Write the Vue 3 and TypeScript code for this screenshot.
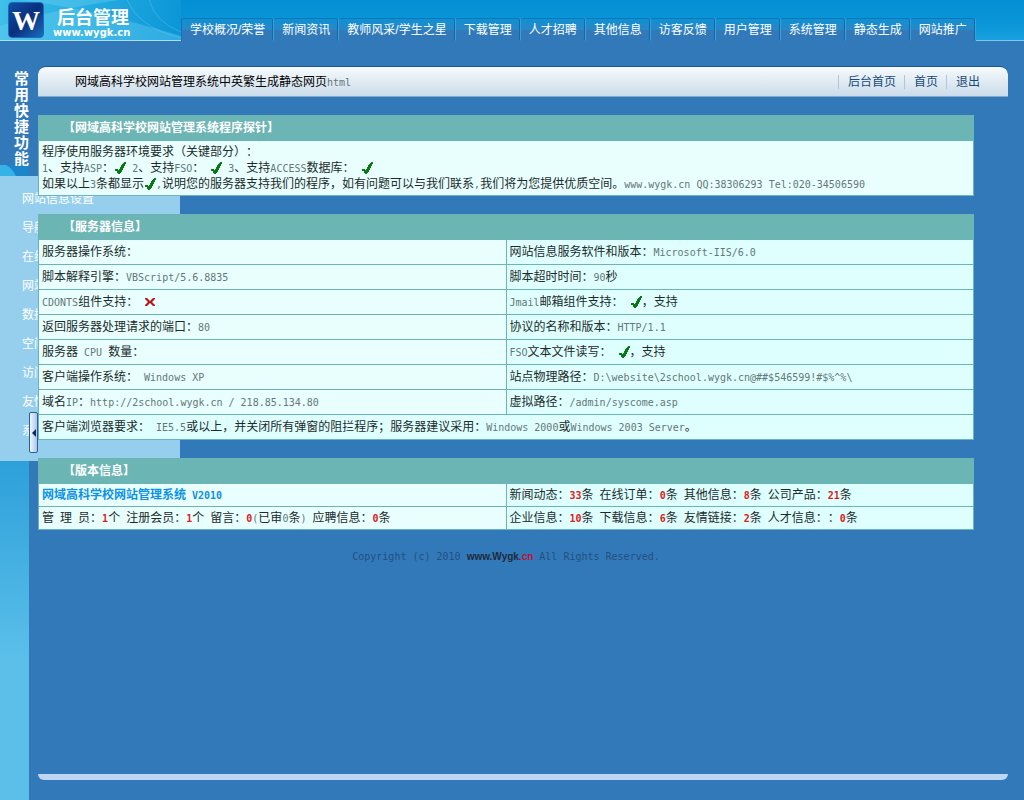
<script setup lang="ts">
import { h, type FunctionalComponent } from 'vue'

const navItems: string[] = [
  '学校概况/荣誉', '新闻资讯', '教师风采/学生之星', '下载管理', '人才招聘', '其他信息',
  '访客反馈', '用户管理', '系统管理', '静态生成', '网站推广',
]
const quickLinks: string[] = ['后台首页', '首页', '退出']
const menuItems: string[] = ['网站信息设置', '导航', '在线', '网站', '数据', '空间', '访问', '友情', '系统']

const probeLines: string[] = [
  '程序使用服务器环境要求（关键部分）：',
  '1、支持ASP：[ok] 2、支持FSO： [ok] 3、支持ACCESS数据库： [ok]',
  '如果以上3条都显示[ok],说明您的服务器支持我们的程序，如有问题可以与我们联系,我们将为您提供优质空间。www.wygk.cn QQ:38306293 Tel:020-34506590',
]
const serverRows: [string, string][] = [
  ['服务器操作系统：', '网站信息服务软件和版本：Microsoft-IIS/6.0'],
  ['脚本解释引擎：VBScript/5.6.8835', '脚本超时时间：90秒'],
  ['CDONTS组件支持： [no]', 'Jmail邮箱组件支持： [ok]，支持'],
  ['返回服务器处理请求的端口：80', '协议的名称和版本：HTTP/1.1'],
  ['服务器 CPU 数量：', 'FSO文本文件读写： [ok]，支持'],
  ['客户端操作系统： Windows XP', '站点物理路径：D:\\website\\2school.wygk.cn@##$546599!#$%^%\\'],
  ['域名IP：http://2school.wygk.cn / 218.85.134.80', '虚拟路径：/admin/syscome.asp'],
]
const browserNote = '客户端浏览器要求： IE5.5或以上，并关闭所有弹窗的阻拦程序；服务器建议采用：Windows 2000或Windows 2003 Server。'
const newsStats = '新闻动态：*33*条 在线订单：*0*条 其他信息：*8*条 公司产品：*21*条'
const memberStats = '管 理 员：*1*个 注册会员：*1*个 留言：*0*(已审0条) 应聘信息：*0*条'
const infoStats = '企业信息：*10*条 下载信息：*6*条 友情链接：*2*条 人才信息：：*0*条'

const tickPath = 'M1 7h3v1h1v-1h1v-2h1v-2h1v-1h1v-1h1v-1h2v2h-1v2h-1v2h-1v2h-1v2h-1v1h-1v1h-2v-1h-1v-2h-2z'
const crossPath = 'M1 2h2l3 3 3-3h2v1L8 6l3 3v1H9L6 7l-3 3H1V9l3-3-3-3z'

/* Splits a line into half-width runs, highlighted *numbers* and [ok]/[no] marks. */
const RichText: FunctionalComponent<{ text: string }> = (props) =>
  props.text.split(/(\[ok\]|\[no\]|\*\d+\*|[\x20-\x29\x2b-\x5a\x5c-\x7e]+)/).filter(Boolean).map((part) => {
    if (part === '[ok]' || part === '[no]') {
      const ok = part === '[ok]'
      return h('svg', { class: ok ? 'mark tick' : 'mark cross', viewBox: '0 0 12 12', role: 'img', 'aria-label': ok ? '支持' : '不支持' }, [
        h('path', { d: ok ? tickPath : crossPath }),
      ])
    }
    if (/^\*\d+\*$/.test(part)) return h('b', { class: 'half count' }, part.slice(1, -1))
    if (/^[\x20-\x7e]+$/.test(part)) return h('span', { class: 'half' }, part)
    return part
  })
RichText.props = ['text']
</script>

<template>
  <div class="page">
    <header class="top">
      <div class="brand">
        <svg class="swirl" viewBox="0 0 182 40" preserveAspectRatio="none" aria-hidden="true">
          <path d="M20 0Q90 8 182 36V40H0V26Q60 8 120 0z" fill="#6fd5f3" opacity=".35" />
          <path d="M128 0Q140 28 182 38M150 0Q156 22 182 32" fill="none" stroke="#7fd9f5" opacity=".3" />
        </svg>
        <span class="badge">W</span>
        <div class="name">
          <strong>后台管理</strong>
          <span>www.wygk.cn</span>
        </div>
      </div>
      <nav class="tabs">
        <a v-for="item in navItems" :key="item" href="#">{{ item }}</a>
      </nav>
      <div class="top-rest"></div>
    </header>

    <div class="body">
      <aside class="rail">
        <h2>常用快捷功能</h2>
        <svg class="crest" viewBox="0 0 38 11" aria-hidden="true">
          <path d="M0 0H29V11H0z" fill="#1c86cb" />
          <path d="M0 0H6Q12 3 16 11H0z" fill="#35b2e6" />
        </svg>
        <ul class="menu">
          <li v-for="(item, i) in menuItems" :key="i"><a href="#">{{ item }}</a></li>
        </ul>
        <button class="handle" type="button" aria-label="收起菜单">
          <svg viewBox="0 0 4 8" aria-hidden="true"><path d="M4 0V8L0 4z" fill="#0c2c5c" /></svg>
        </button>
      </aside>

      <main class="main">
        <div class="titlebar">
          <h1><RichText text="网域高科学校网站管理系统中英繁生成静态网页html" /></h1>
          <nav class="quick">
            <a v-for="link in quickLinks" :key="link" href="#">{{ link }}</a>
          </nav>
        </div>

        <div class="content">
          <table>
            <thead><tr><th>【网域高科学校网站管理系统程序探针】</th></tr></thead>
            <tbody>
              <tr>
                <td class="probe">
                  <p v-for="line in probeLines" :key="line"><RichText :text="line" /></p>
                </td>
              </tr>
            </tbody>
          </table>

          <table>
            <thead><tr><th colspan="2">【服务器信息】</th></tr></thead>
            <tbody>
              <tr v-for="row in serverRows" :key="row[0]">
                <td><RichText :text="row[0]" /></td>
                <td class="alt"><RichText :text="row[1]" /></td>
              </tr>
              <tr><td colspan="2" class="alt"><RichText :text="browserNote" /></td></tr>
            </tbody>
          </table>

          <table class="compact">
            <thead><tr><th colspan="2">【版本信息】</th></tr></thead>
            <tbody>
              <tr>
                <td class="product"><RichText text="网域高科学校网站管理系统 V2010" /></td>
                <td class="alt"><RichText :text="newsStats" /></td>
              </tr>
              <tr>
                <td><RichText :text="memberStats" /></td>
                <td class="alt"><RichText :text="infoStats" /></td>
              </tr>
            </tbody>
          </table>

          <footer class="copyright">
            <RichText text="Copyright (c) 2010 " /><a href="#">www.Wygk<em>.cn</em></a><RichText text=" All Rights Reserved." />
          </footer>
        </div>
        <div class="base"></div>
      </main>
    </div>
  </div>
</template>

<style>
body {
  margin: 0;
  background: #3279b9;
}
.half {
  font-family: "DejaVu Sans Mono", "Liberation Mono", monospace;
  font-size: 10px;
  line-height: 12px;
  color: #657777;
}
.count {
  color: #e01a1a;
  font-weight: bold;
}
.mark {
  width: 12px;
  height: 12px;
  vertical-align: -2px;
}
.tick { fill: #087a14; }
.cross { fill: #b81616; }
</style>

<style scoped>
.page {
  display: flex;
  flex-direction: column;
  min-height: 100vh;
  background: #3279b9;
  font-family: "Liberation Sans", "Noto Sans CJK SC", sans-serif;
  font-size: 12px;
  line-height: 16px;
  text-spacing-trim: space-all;
  color: #1c2b2b;
}
a { text-decoration: none; }
h1, h2, p, ul { margin: 0; padding: 0; }

.top {
  display: flex;
  height: 41px;
  background: linear-gradient(#048fd4, #0b96d8 60%, #1aa2e0);
}
.brand {
  position: relative;
  box-sizing: border-box;
  width: 181px;
  display: flex;
  gap: 13px;
  padding: 2px 0 0 8px;
  border-bottom: 1px solid #a8e2f8;
  background: linear-gradient(100deg, #3fbfe9, #22a9df 55%, #0b95d7);
}
.swirl {
  position: absolute;
  inset: 0;
  width: 100%;
  height: 100%;
}
.badge {
  position: relative;
  box-sizing: border-box;
  width: 36px;
  height: 36px;
  border: 1px solid #1b6bb8;
  border-radius: 4px;
  background: linear-gradient(135deg, #0f4fa5, #0a2f7c 50%, #1a6cc0);
  color: #fff;
  font: bold 28px/36px "Liberation Serif", serif;
  text-align: center;
}
.name {
  position: relative;
  display: flex;
  flex-direction: column;
  padding-top: 7px;
  color: #fff;
}
.name strong {
  font-size: 18px;
  line-height: 18px;
}
.name span {
  font: bold 10px/12px "DejaVu Sans", sans-serif;
  margin-left: -4px;
}
.tabs {
  display: flex;
  margin-top: 18px;
  background: linear-gradient(#0c92d4, #2a86c6 50%, #3279b9 55%);
  border-left: 1px solid #1273b4;
}
.tabs a {
  box-sizing: border-box;
  padding: 3px 7px 0 8px;
  border-top: 1px solid #0c78b8;
  border-right: 1px solid #0b6cab;
  border-radius: 2px;
  box-shadow: 1px 0 0 #3f9dd8;
  margin-right: 1px;
  color: #fff;
  white-space: nowrap;
}
.top-rest {
  flex: 1;
  box-sizing: border-box;
  border-bottom: 1px solid #7cc9ef;
}

.body {
  flex: 1;
  display: flex;
}
.rail {
  position: relative;
  box-sizing: border-box;
  width: 29px;
  padding-top: 30px;
  background: linear-gradient(#3279b9 0, #3279b9 134px, #219bd8 134px, #2da0da 420px, #5bbfea 620px);
}
.rail h2 {
  width: 15px;
  margin-left: 14px;
  font-size: 15px;
  line-height: 16px;
  word-break: break-all;
  color: #fff;
}
.crest {
  position: absolute;
  left: 0;
  top: 124px;
  width: 38px;
  height: 11px;
  z-index: -1;
}
.rail { z-index: 0; }
.menu {
  position: absolute;
  left: 0;
  top: 135px;
  box-sizing: border-box;
  width: 180px;
  height: 285px;
  padding: 9px 0 0 22px;
  list-style: none;
  background: #96cfee;
}
.menu li {
  height: 29px;
  line-height: 28px;
}
.menu a { color: #fff; }
.handle {
  position: absolute;
  left: 29px;
  top: 371px;
  width: 9px;
  height: 41px;
  padding: 0;
  display: flex;
  align-items: center;
  justify-content: center;
  border: 1px solid #285f9f;
  border-radius: 2px;
  background: linear-gradient(90deg, #f2f7ff, #a9c6ea);
}
.handle svg {
  width: 4px;
  height: 8px;
}

.main {
  flex: 1;
  min-width: 0;
  display: flex;
  flex-direction: column;
  padding: 25px 16px 20px 9px;
}
.titlebar {
  display: flex;
  align-items: center;
  justify-content: space-between;
  box-sizing: border-box;
  height: 31px;
  padding: 0 28px 0 37px;
  border-top: 1px solid #1c5790;
  border-bottom: 1px solid #8aa6c2;
  border-radius: 8px 8px 0 0;
  background: linear-gradient(#f6fafc, #cbdcea);
}
.titlebar h1 {
  font-size: 12px;
  font-weight: normal;
  color: #000;
}
.quick {
  display: flex;
  gap: 8px;
}
.quick a {
  padding: 0 0 0 9px;
  border-left: 1px solid #b3c5d8;
  line-height: 14px;
  color: #17497b;
}
.content {
  position: relative;
  z-index: 1;
  padding: 18px 34px 20px 0;
}
table {
  width: 100%;
  margin-bottom: 18px;
  table-layout: fixed;
  border-collapse: collapse;
  background: #e8fffe;
}
tr { height: 25px; }
.compact tbody tr { height: 23px; }
th, td {
  padding: 0 2px 0 3px;
  border: 1px solid #6cb5b5;
  text-align: left;
  white-space: pre-wrap;
}
th {
  padding-left: 24px;
  background: #6cb5b5;
  color: #fff;
}
.alt { background: #dfffff; }
td.probe { padding: 3px 2px 3px 3px; }
.probe p { height: 16px; }
.product,
.product :deep(.half) {
  color: #0b91e6;
  font-weight: bold;
}
.copyright {
  text-align: center;
  white-space: pre-wrap;
}
.copyright :deep(.half) { color: #24507f; }
.copyright a {
  font-size: 10px;
  font-weight: bold;
  color: #1d2b3c;
}
.copyright em {
  font-style: normal;
  color: #c01030;
}
.base {
  height: 6px;
  margin-top: auto;
  border-radius: 0 0 6px 6px;
  background: #bfd6f3;
}
</style>
